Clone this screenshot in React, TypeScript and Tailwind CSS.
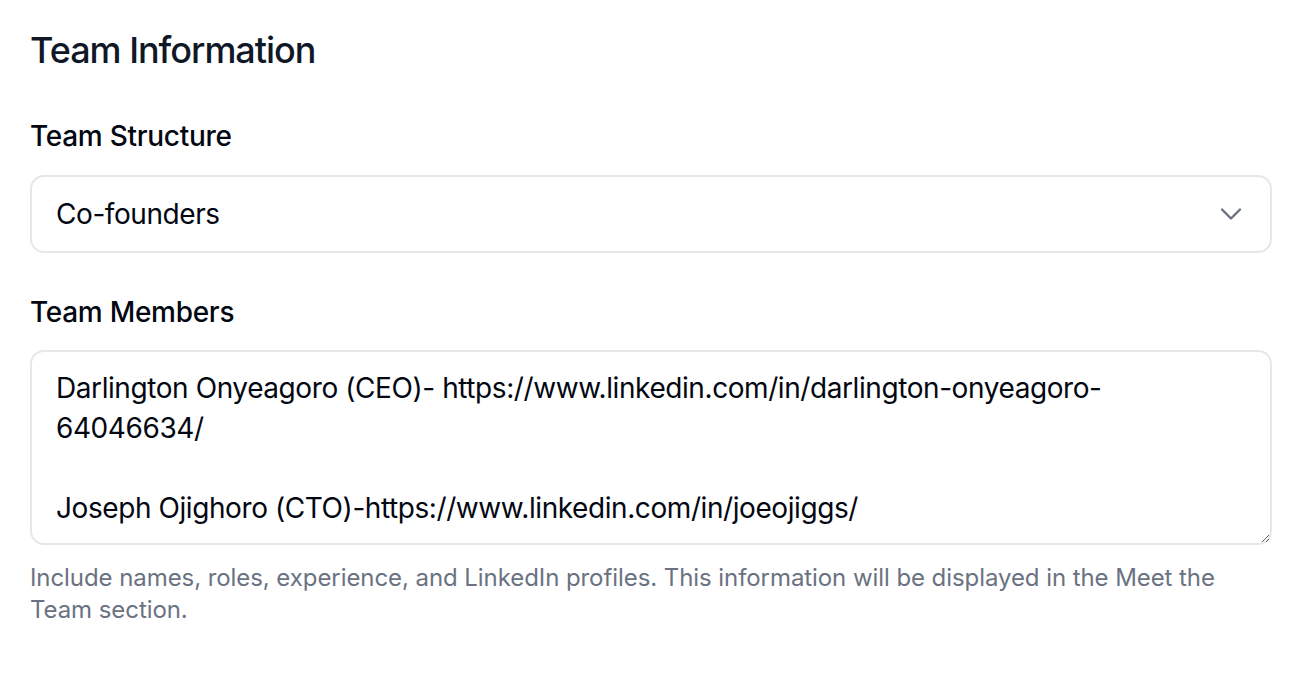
import React from "react";
import { ChevronDown } from "lucide-react";

const members =
  "Darlington Onyeagoro (CEO)- https://www.linkedin.com/in/darlington-onyeagoro-64046634/\n\nJoseph Ojighoro (CTO)-https://www.linkedin.com/in/joeojiggs/";

export default function App() {
  return (
    <div
      className="min-h-screen bg-white pl-[30px] pr-[24px] pt-[22px] text-gray-900"
      style={{ fontFamily: "Inter, 'Noto Sans', sans-serif" }}
    >
      {/* Section title */}
      <h2 className="text-[36px] leading-[56px] font-medium tracking-[-0.028em] text-gray-900 mb-[38px]">
        Team Information
      </h2>

      {/* Team structure */}
      <label className="block text-[28px] leading-[40px] font-medium tracking-[-0.01em] text-gray-950 mb-[19px]">
        Team Structure
      </label>
      <div className="relative">
        <select
          defaultValue="cofounders"
          className="w-full h-[78px] appearance-none rounded-[14px] border-2 border-gray-200 bg-white pl-[24px] pr-16 text-[28px] tracking-[-0.015em] text-gray-950 outline-none"
        >
          <option value="solo">Solo founder</option>
          <option value="cofounders">Co-founders</option>
          <option value="team">Small team</option>
        </select>
        <ChevronDown
          size={36}
          strokeWidth={1.6}
          className="pointer-events-none absolute right-[23px] top-1/2 -translate-y-1/2 text-gray-500"
        />
      </div>

      {/* Team members */}
      <label className="block mt-[39px] text-[28px] leading-[40px] font-medium tracking-[-0.01em] text-gray-950 mb-[18px]">
        Team Members
      </label>
      <textarea
        defaultValue={members}
        className="block w-full h-[195px] rounded-[14px] border-2 border-gray-200 bg-white pl-[24px] pr-[24px] pt-[16px] text-[28px] leading-[40px] tracking-[-0.015em] text-gray-950 outline-none"
      />
      <p className="mt-[17px] text-[24px] leading-[32px] tracking-[-0.003em] text-gray-500">
        Include names, roles, experience, and LinkedIn profiles. This information will be
        displayed in the Meet the Team section.
      </p>
    </div>
  );
}
